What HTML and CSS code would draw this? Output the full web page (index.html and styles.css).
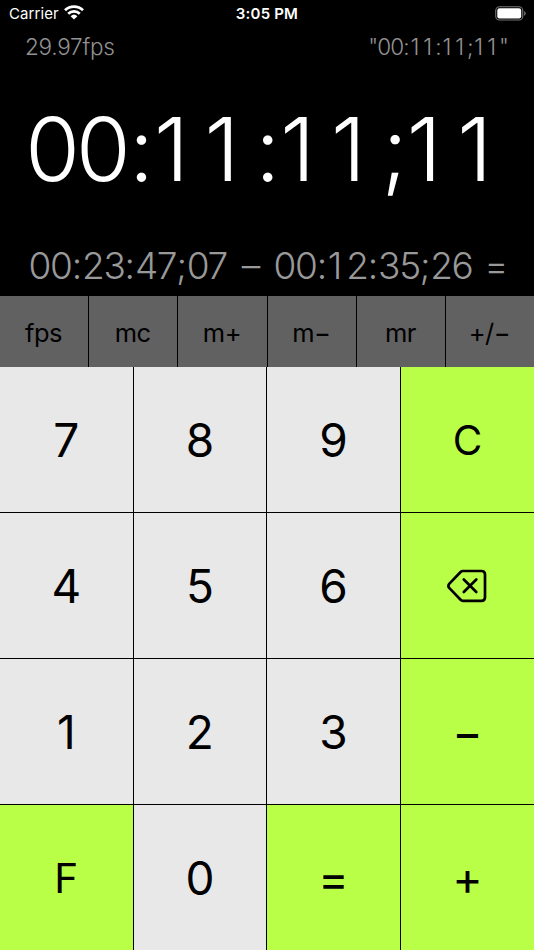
FILE: index.html
```html
<!DOCTYPE html>
<html lang="en">
<head>
<meta charset="utf-8">
<title>Timecode Calculator</title>
<link rel="stylesheet" href="styles.css">
</head>
<body>
<main class="app">
  <header class="status">
    <div class="carrier"><span>Carrier</span>
      <svg class="wifi" width="20" height="15" viewBox="0 0 20 15"><g fill="none" stroke="#fff" stroke-width="2.7"><path d="M1 5.2a13 13 0 0 1 18 0"/><path d="M4.2 8.7a8.3 8.3 0 0 1 11.6 0"/></g><path d="M6.6 11.2a5 5 0 0 1 6.8 0L10 14.6z" fill="#fff"/></svg>
    </div>
    <div class="clock">3:05 PM</div>
    <svg class="battery" width="32" height="15" viewBox="0 0 32 15"><rect x=".75" y=".75" width="27" height="13.2" rx="3.8" fill="none" stroke="#777" stroke-width="1.1"/><rect x="2.3" y="2.3" width="23.9" height="10.1" rx="2.2" fill="#fff"/><path d="M29.2 5.2c2 .7 2 3.8 0 4.5z" fill="#777"/></svg>
  </header>
  <section class="display">
    <div class="info"><span class="rate">29.97fps</span><span class="memory tc">"00<i>:</i><u>1</u><u>1</u><i>:</i><u>1</u><u>1</u><i>;</i><u>1</u><u>1</u>"</span></div>
    <div class="result tc"><u class="zero">0</u><u class="zero">0</u><i>:</i><u>1</u><u>1</u><i>:</i><u>1</u><u>1</u><i>;</i><u>1</u><u>1</u></div>
    <div class="history tc"><span class="operand">00<i>:</i>23<i>:</i>47<i>;</i>07</span><b>–</b><span class="operand">00<i>:</i><u>1</u>2<i>:</i>35<i>;</i>26</span><b class="equals">=</b></div>
  </section>
  <section class="functions">
    <button>fps</button><button>mc</button><button>m+</button><button>m−</button><button>mr</button><button>+/−</button>
  </section>
  <section class="keys">
    <button>7</button><button>8</button><button>9</button><button class="accent letter">C</button>
    <button>4</button><button>5</button><button>6</button>
    <button class="accent delete" aria-label="Delete"><svg width="40" height="34" viewBox="0 0 40 34" fill="none" stroke="#000" stroke-width="2.7" stroke-linecap="round" stroke-linejoin="round"><path d="M15.8 2H34.4Q38 2 38 5.6V28.2Q38 31.8 34.4 31.8H15.8Q14.6 31.8 13.6 30.8L2.2 18.9Q.6 16.9 2.2 14.9L13.6 3Q14.6 2 15.8 2Z"/><path d="M16.8 10.5L29.3 23M29.3 10.5L16.8 23"/></svg></button>
    <button>1</button><button>2</button><button>3</button><button class="accent operator">−</button>
    <button class="accent letter">F</button><button>0</button><button class="accent operator">=</button><button class="accent operator">+</button>
  </section>
</main>
</body>
</html>
```
FILE: styles.css
```css
* { box-sizing: border-box; }
body { margin: 0; background: #000; }
.app {
  width: 534px;
  height: 950px;
  display: grid;
  grid-template-columns: 534px;
  grid-template-rows: 28px 268.4px 71px 1fr;
  overflow: hidden;
  font-family: Inter, sans-serif;
  color: #000;
}
.status {
  display: grid;
  grid-template-columns: 1fr auto 1fr;
  align-items: center;
  padding: 0 7px 1px 9px;
  color: #fff;
  font-size: 15px;
}
.carrier { display: flex; align-items: center; gap: 5px; letter-spacing: .1px; }
.wifi { margin-top: -2px; }
.clock { margin-right: 2px; font-weight: 600; letter-spacing: .2px; }
.battery { justify-self: end; }
.display {
  display: flex;
  flex-direction: column;
  font-weight: 300;
  white-space: nowrap;
}
.info {
  height: 37px;
  padding: 0 26px 0 25px;
  display: flex;
  justify-content: space-between;
  align-items: center;
  color: #929292;
  font-size: 22.5px;
  letter-spacing: -.9px;
}
.rate { letter-spacing: -.25px; }
.tc i, .tc u { display: inline-block; font-style: normal; text-decoration: none; text-align: center; letter-spacing: 0; }
.tc i { width: .28em; }
.tc u { width: .57em; padding-right: .09em; }
.result {
  height: 171px;
  padding-left: 27.5px;
  color: #fff;
  font-size: 88.5px;
  line-height: 167px;
}
.result u { width: 50.7px; padding-right: .2em; }
.result i { width: 25px; }
.result .zero { padding: 0; text-indent: -.025em; }
.history {
  height: 60px;
  padding-left: 28.5px;
  color: #999;
  font-size: 37px;
  line-height: 59px;
  letter-spacing: -.035em;
}
.history u { width: .52em; }
.operand { display: inline-block; width: 200px; }
.history b { display: inline-block; width: 45px; text-align: center; font-weight: 300; letter-spacing: 0; }
.history .equals { width: 35px; text-align: right; }
.functions, .keys { display: grid; background: #000; }
.functions { grid-template-columns: 88px 88px 88.5px 88px 88px 88px; justify-content: space-between; }
.keys { grid-template: repeat(4, 1fr) / 132.5px 132.6px 132.6px 133px; justify-content: space-between; row-gap: 1px; }
button {
  min-width: 0;
  margin: 0;
  padding: 0;
  border: 0;
  border-radius: 0;
  display: flex;
  align-items: center;
  justify-content: center;
  font-family: inherit;
  color: #000;
}
.functions button { padding: 2px 1px 0 0; background: #616161; font-size: 25.5px; letter-spacing: -.5px; }
.keys button { background: #e8e8e8; font-size: 46px; }
.keys .accent { background: #b9ff48; }
.keys .letter { padding: 2px 0 0; font-size: 40.5px; }
.keys .delete { padding-right: 1px; }
.keys .operator { font-size: 46px; }
```
